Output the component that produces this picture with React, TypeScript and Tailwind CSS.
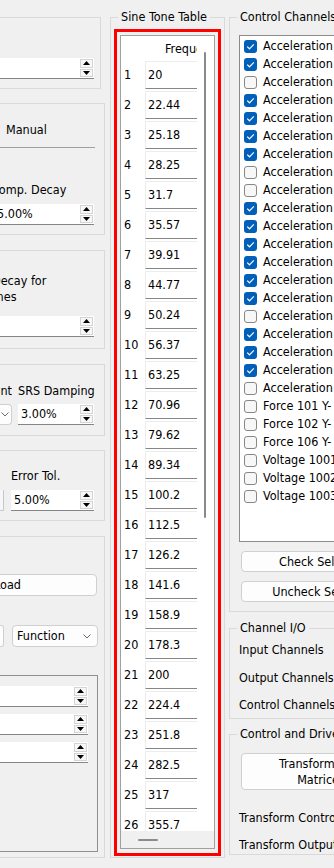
import React from "react";

const Up = () => (
  <svg width="7" height="4" viewBox="0 0 7 4">
    <polygon points="0,4 3.5,0 7,4" fill="#000" />
  </svg>
);
const Down = () => (
  <svg width="7" height="4" viewBox="0 0 7 4">
    <polygon points="0,0 3.5,4 7,0" fill="#000" />
  </svg>
);
const Chevron = () => (
  <svg width="8" height="5" viewBox="0 0 8 5">
    <polyline points="0.5,0.5 4,4 7.5,0.5" fill="none" stroke="#6a6a6a" strokeWidth="1" />
  </svg>
);

function Spin({ text = "", className = "", textClass = "pl-[3px]" }: { text?: string; className?: string; textClass?: string }) {
  return (
    <div className={`flex h-[21px] shrink-0 border-b border-[#868686] bg-white ${className}`}>
      <div className={`min-w-0 flex-1 overflow-hidden whitespace-nowrap leading-[20px] ${textClass}`}>{text}</div>
      <div className="flex w-[14px] flex-col gap-[1px] bg-white py-[1px] pr-[1px]">
        <div className="flex flex-1 items-center justify-center border border-[#d4d4d4] bg-[#f7f7f7]">
          <Up />
        </div>
        <div className="flex flex-1 items-center justify-center border border-[#d4d4d4] bg-[#f7f7f7]">
          <Down />
        </div>
      </div>
    </div>
  );
}

const freqs = [
  "20", "22.44", "25.18", "28.25", "31.7", "35.57", "39.91", "44.77", "50.24", "56.37", "63.25", "70.96", "79.62",
  "89.34", "100.2", "112.5", "126.2", "141.6", "158.9", "178.3", "200", "224.4", "251.8", "282.5", "317", "355.7",
];

const channels: [string, boolean][] = [
  ["Acceleration 1 X+", true],
  ["Acceleration 2 X+", true],
  ["Acceleration 3 X+", false],
  ["Acceleration 4 X+", true],
  ["Acceleration 5 X+", true],
  ["Acceleration 6 X+", true],
  ["Acceleration 7 X+", true],
  ["Acceleration 8 X+", false],
  ["Acceleration 9 X+", false],
  ["Acceleration 10 X+", true],
  ["Acceleration 11 X+", true],
  ["Acceleration 12 X+", true],
  ["Acceleration 13 X+", true],
  ["Acceleration 14 X+", true],
  ["Acceleration 15 X+", true],
  ["Acceleration 16 X+", false],
  ["Acceleration 17 X+", true],
  ["Acceleration 18 X+", true],
  ["Acceleration 19 X+", true],
  ["Acceleration 20 X+", false],
  ["Force 101 Y-", false],
  ["Force 102 Y-", false],
  ["Force 106 Y-", false],
  ["Voltage 1001", false],
  ["Voltage 1002", false],
  ["Voltage 1003", false],
];

function Check({ on }: { on: boolean }) {
  if (on)
    return (
      <div className="flex h-[13px] w-[13px] shrink-0 items-center justify-center rounded-[3px] bg-[#005fb8]">
        <svg width="13" height="13" viewBox="0 0 13 13">
          <polyline points="3.2,6.6 5.5,8.8 9.8,4.4" fill="none" stroke="#fff" strokeWidth="1.2" />
        </svg>
      </div>
    );
  return <div className="h-[13px] w-[13px] shrink-0 rounded-[3px] border border-[#878787] bg-[#f7f7f7]" />;
}

export default function App() {
  return (
    <div className="flex h-[868px] w-[334px] items-start overflow-hidden bg-[#f0f0f0] font-[family-name:'DejaVu_Sans_Condensed','DejaVu_Sans',sans-serif] text-[12.5px] text-black [font-stretch:condensed]">
      {/* Left column */}
      <div className="flex w-[106px] shrink-0 flex-col overflow-hidden pt-[17px]">
        {/* G1 */}
        <div className="h-[72px] w-[101px] border-y border-r border-[#d9d9d9] pt-[40px]">
          <Spin className="w-[94px]" />
        </div>
        {/* G2 */}
        <div className="mt-[14px] flex h-[132px] w-[105px] flex-col border-y border-r border-[#d9d9d9]">
          <div className="h-[44px] w-[95px] border-b border-[#a0a0a0] pl-[6px] pt-[18px] leading-[16px]">Manual</div>
          <div className="-ml-[9px] mt-[34px] whitespace-nowrap leading-[16px]">Comp. Decay</div>
          <Spin className="mt-[6px] w-[94px]" text="5.00%" textClass="-ml-[3px]" />
        </div>
        {/* G3 */}
        <div className="mt-[15px] flex h-[99px] w-[105px] flex-col border-y border-r border-[#d9d9d9]">
          <div className="-ml-[8px] mt-[22px] whitespace-nowrap leading-[16px]">Decay for</div>
          <div className="-ml-[15px] whitespace-nowrap leading-[16px]">Tones</div>
          <Spin className="mt-[11px] w-[94px]" />
        </div>
        {/* G4 */}
        <div className="mt-[15px] flex h-[72px] w-[105px] flex-col border-y border-r border-[#d9d9d9]">
          <div className="mt-[18px] flex leading-[16px]">
            <div className="flex w-[12px] shrink-0 justify-end overflow-hidden whitespace-nowrap">Count</div>
            <div className="ml-[6px] whitespace-nowrap">SRS Damping</div>
          </div>
          <div className="mt-[5px] flex">
            <div className="flex h-[21px] w-[12px] shrink-0 items-center justify-start rounded-r-[4px] border border-l-0 border-[#d0d0d0] bg-[#fdfdfd] pl-[1px]">
              <Chevron />
            </div>
            <Spin className="ml-[6px] w-[76px]" text="3.00%" />
          </div>
        </div>
        {/* G5 */}
        <div className="mt-[14px] flex h-[71px] w-[105px] flex-col border-y border-r border-[#d9d9d9]">
          <div className="mt-[17px] pl-[11px] leading-[16px]">Error Tol.</div>
          <div className="mt-[6px] flex">
            <div className="h-[21px] w-[4px] shrink-0 border-b border-r border-[#c8c8c8] bg-[#f7f7f7]" />
            <Spin className="ml-[7px] w-[83px]" text="5.00%" />
          </div>
        </div>
        {/* G6 */}
        <div className="mt-[15px] flex h-[322px] w-[105px] flex-col border-y border-r border-[#d9d9d9]">
          <div className="-ml-[30px] mt-[37px] h-[22px] w-[127px] shrink-0 rounded-[4px] border border-[#d0d0d0] bg-[#fdfdfd] pl-[23px] leading-[20px]">
            Load
          </div>
          <div className="mt-[29px] flex">
            <div className="h-[22px] w-[4px] shrink-0 rounded-r-[3px] border border-l-0 border-[#d0d0d0] bg-[#fdfdfd]" />
            <div className="ml-[8px] flex h-[22px] w-[86px] shrink-0 items-center justify-between rounded-[4px] border border-[#d0d0d0] bg-[#fdfdfd] pl-[4px] pr-[6px]">
              <span className="leading-[20px]">Function</span>
              <Chevron />
            </div>
          </div>
          <div className="mt-[28px] flex h-[177px] w-[98px] flex-col border-y border-r border-[#8f8f8f] pt-[10px]">
            <Spin className="w-[88px]" />
            <Spin className="mt-[7px] w-[88px]" />
            <Spin className="mt-[7px] w-[88px]" />
          </div>
        </div>
      </div>

      {/* Middle column */}
      <fieldset className="ml-[4px] mt-[9px] w-[115px] shrink-0 border border-[#d9d9d9]">
        <legend className="ml-[7px] px-[3px] leading-[16px] whitespace-nowrap">Sine Tone Table</legend>
        <div className="px-[3px] pb-[1px] pt-[4px]">
          <div className="h-[827px] border-[3px] border-[#ff0000] p-[3px]">
            <div className="flex h-[814px] flex-col border border-[#a0a0a0] bg-white">
              <div className="flex h-[795px]">
                <div className="flex w-[76px] shrink-0 flex-col overflow-hidden">
                  <div className="flex h-[25px] shrink-0">
                    <div className="w-[24px] shrink-0" />
                    <div className="whitespace-nowrap pl-[20px] leading-[25px]">Frequency (Hz)</div>
                  </div>
                  <div className="flex h-[770px] flex-col gap-[2px] overflow-hidden">
                    {freqs.map((f, i) => (
                      <div key={i} className="flex h-[28px] shrink-0">
                        <div className="w-[24px] shrink-0 pl-[3px] leading-[28px]">{i + 1}</div>
                        <div className="w-[60px] shrink-0 border border-[#ececec] border-b-[#868686] bg-white pl-[2px] leading-[26px]">
                          {f}
                        </div>
                      </div>
                    ))}
                  </div>
                </div>
                <div className="w-[17px] shrink-0 pt-[16px]">
                  <div className="ml-[7px] h-[466px] w-[2px] rounded-full bg-[#8a8a8a]" />
                </div>
              </div>
              <div className="h-[17px] shrink-0 bg-[#f0f0f0] pt-[8px]">
                <div className="ml-[17px] h-[2px] w-[20px] rounded-full bg-[#8a8a8a]" />
              </div>
            </div>
          </div>
        </div>
      </fieldset>

      {/* Right column */}
      <div className="ml-[4px] flex w-[200px] shrink-0 flex-col">
        <fieldset className="mt-[9px] border border-[#d9d9d9]">
          <legend className="ml-[7px] px-[3px] leading-[16px] whitespace-nowrap">Control Channels</legend>
          <div className="pb-[9px] pl-[9px] pt-[10px]">
            <div className="h-[507px] w-[200px] border border-[#8c8c8c] bg-white pl-[4px] pt-[1px]">
              {channels.map(([name, on], i) => (
                <div key={i} className="flex h-[18px] items-center gap-[6px] whitespace-nowrap">
                  <Check on={on} />
                  <span className="leading-[18px]">{name}</span>
                </div>
              ))}
            </div>
            <div className="ml-[2px] mt-[9px] h-[21px] w-[163px] rounded-[4px] border border-[#d0d0d0] bg-[#fdfdfd] text-center leading-[19px]">
              Check Selected
            </div>
            <div className="ml-[2px] mt-[9px] h-[21px] w-[163px] rounded-[4px] border border-[#d0d0d0] bg-[#fdfdfd] text-center leading-[19px]">
              Uncheck Selected
            </div>
          </div>
        </fieldset>

        <fieldset className="mt-[8px] border border-[#d9d9d9]">
          <legend className="ml-[7px] px-[3px] leading-[16px] whitespace-nowrap">Channel I/O</legend>
          <div className="pl-[9px] whitespace-nowrap">
            <div className="h-[28px] leading-[28px]">Input Channels</div>
            <div className="h-[27px] leading-[27px]">Output Channels</div>
            <div className="h-[27px] leading-[27px]">Control Channels</div>
          </div>
        </fieldset>

        <fieldset className="mt-[7px] border border-[#d9d9d9]">
          <legend className="ml-[7px] px-[3px] leading-[16px] whitespace-nowrap">Control and Drive</legend>
          <div className="pb-[1px] pl-[9px] pt-[11px] whitespace-nowrap">
            <div className="ml-[2px] flex h-[37px] w-[160px] flex-col items-center justify-center rounded-[4px] border border-[#d0d0d0] bg-[#fdfdfd] leading-[16px]">
              <span>Transformation</span>
              <span>Matrices</span>
            </div>
            <div className="mt-[20px] leading-[16px]">Transform Control</div>
            <div className="mt-[11px] leading-[16px]">Transform Output</div>
          </div>
        </fieldset>
      </div>
    </div>
  );
}
